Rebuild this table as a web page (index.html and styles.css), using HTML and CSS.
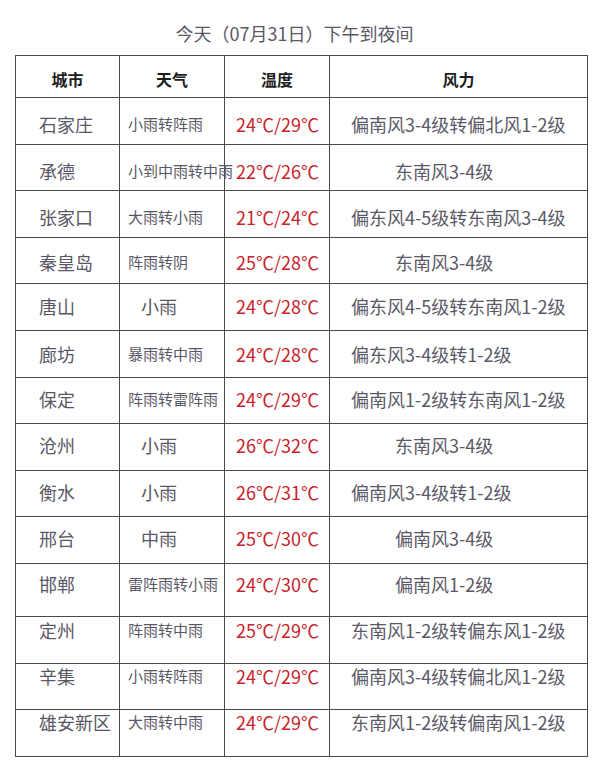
FILE: index.html
```html
<!DOCTYPE html>
<html lang="zh-CN">
<head>
<meta charset="utf-8">
<title>今天（07月31日）下午到夜间</title>
<link rel="stylesheet" href="styles.css">
</head>
<body>
<div class="page">
  <h1 class="title">今天（07月31日）下午到夜间</h1>
  <table class="wx">
    <colgroup>
      <col class="c-city"><col class="c-weather"><col class="c-temp"><col class="c-wind">
    </colgroup>
    <thead>
      <tr><th>城市</th><th>天气</th><th>温度</th><th>风力</th></tr>
    </thead>
    <tbody>
      <tr><td class="city">石家庄</td><td class="weather">小雨转阵雨</td><td class="temp">24℃/29℃</td><td class="wind">偏南风3-4级转偏北风1-2级</td></tr>
      <tr><td class="city">承德</td><td class="weather">小到中雨转中雨</td><td class="temp">22℃/26℃</td><td class="wind indent">东南风3-4级</td></tr>
      <tr><td class="city">张家口</td><td class="weather">大雨转小雨</td><td class="temp">21℃/24℃</td><td class="wind">偏东风4-5级转东南风3-4级</td></tr>
      <tr><td class="city">秦皇岛</td><td class="weather">阵雨转阴</td><td class="temp">25℃/28℃</td><td class="wind indent">东南风3-4级</td></tr>
      <tr><td class="city">唐山</td><td class="weather short">小雨</td><td class="temp">24℃/28℃</td><td class="wind">偏东风4-5级转东南风1-2级</td></tr>
      <tr><td class="city">廊坊</td><td class="weather">暴雨转中雨</td><td class="temp">24℃/28℃</td><td class="wind">偏东风3-4级转1-2级</td></tr>
      <tr><td class="city">保定</td><td class="weather">阵雨转雷阵雨</td><td class="temp">24℃/29℃</td><td class="wind">偏南风1-2级转东南风1-2级</td></tr>
      <tr><td class="city">沧州</td><td class="weather short">小雨</td><td class="temp">26℃/32℃</td><td class="wind indent">东南风3-4级</td></tr>
      <tr><td class="city">衡水</td><td class="weather short">小雨</td><td class="temp">26℃/31℃</td><td class="wind">偏南风3-4级转1-2级</td></tr>
      <tr><td class="city">邢台</td><td class="weather short">中雨</td><td class="temp">25℃/30℃</td><td class="wind indent">偏南风3-4级</td></tr>
      <tr class="tall"><td class="city">邯郸</td><td class="weather">雷阵雨转小雨</td><td class="temp">24℃/30℃</td><td class="wind indent">偏南风1-2级</td></tr>
      <tr><td class="city">定州</td><td class="weather">阵雨转中雨</td><td class="temp">25℃/29℃</td><td class="wind">东南风1-2级转偏东风1-2级</td></tr>
      <tr><td class="city">辛集</td><td class="weather">小雨转阵雨</td><td class="temp">24℃/29℃</td><td class="wind">偏南风3-4级转偏北风1-2级</td></tr>
      <tr><td class="city">雄安新区</td><td class="weather">大雨转中雨</td><td class="temp">24℃/29℃</td><td class="wind">东南风1-2级转偏南风1-2级</td></tr>
    </tbody>
  </table>
</div>
</body>
</html>
```
FILE: styles.css
```css
html, body {
  margin: 0;
  padding: 0;
  background: #ffffff;
}
body {
  font-family: "Noto Sans CJK SC", "Noto Sans", sans-serif;
  color: #5a5866;
}
.page {
  padding: 21px 0 0 15px;
  width: 572px;
}
.title {
  margin: 0 0 10px 0;
  font-size: 18px;
  font-weight: normal;
  line-height: 24px;
  height: 24px;
  text-align: center;
  color: #5a5866;
  padding-right: 13px;
  white-space: nowrap;
}
.wx {
  border-collapse: collapse;
  table-layout: fixed;
  width: 572px;
}
.c-city { width: 104px; }
.c-weather { width: 105px; }
.c-temp { width: 105px; }
.c-wind { width: 258px; }
.wx th, .wx td {
  border: 1px solid #4a4a4a;
  padding: 0;
  vertical-align: top;
  white-space: nowrap;
  overflow: visible;
}
.wx th {
  height: 42px;
  box-sizing: border-box;
  padding-top: 11px;
  line-height: 24px;
  font-size: 16px;
  font-weight: bold;
  color: #1e1e1e;
  text-align: center;
}
.wx tbody tr { height: 46.6px; }
.wx tbody tr.tall { height: 53.3px; }
.wx td {
  text-align: left;
  line-height: 20px;
  padding-top: 12px;
}
.city {
  font-size: 18px;
  padding-left: 23px !important;
}
.weather {
  font-size: 15px;
  padding-left: 8px !important;
}
.weather.short {
  font-size: 18px;
  padding-left: 21px !important;
}
.temp {
  font-size: 18px;
  color: #c8232c;
  padding-left: 11px !important;
}
.wind {
  font-size: 18px;
  padding-left: 21px !important;
}
.wind.indent {
  padding-left: 65px !important;
}
.wx tbody tr:nth-child(1) td { padding-top: 16px; }
.wx tbody tr:nth-child(2) td { padding-top: 16px; }
.wx tbody tr:nth-child(3) td { padding-top: 15.5px; }
.wx tbody tr:nth-child(4) td { padding-top: 14px; }
.wx tbody tr:nth-child(5) td { padding-top: 12px; }
.wx tbody tr:nth-child(6) td { padding-top: 13px; }
.wx tbody tr:nth-child(7) td { padding-top: 11.3px; }
.wx tbody tr:nth-child(8) td { padding-top: 11px; }
.wx tbody tr:nth-child(9) td { padding-top: 11px; }
.wx tbody tr:nth-child(10) td { padding-top: 10.6px; }
.wx tbody tr:nth-child(11) td { padding-top: 10px; }
.wx tbody tr:nth-child(12) td { padding-top: 2.7px; }
.wx tbody tr:nth-child(13) td { padding-top: 2px; }
.wx tbody tr:nth-child(14) td { padding-top: 1.4px; }
```
